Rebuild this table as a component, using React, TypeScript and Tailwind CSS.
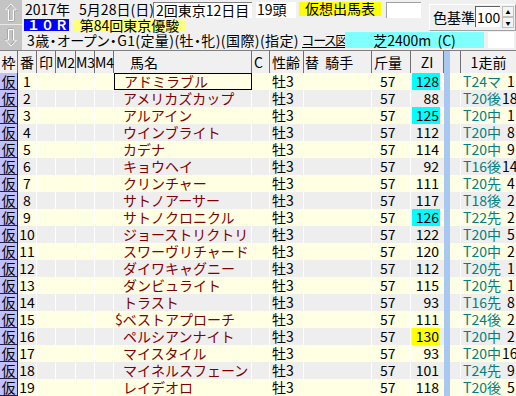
import React from "react";

type Horse = {
  no: number;
  name: string;
  zi: number;
  hl?: "cyan" | "yellow";
  prev: string;
  pos: number;
};

const horses: Horse[] = [
  { no: 1, name: "アドミラブル", zi: 128, hl: "cyan", prev: "T24マ", pos: 1 },
  { no: 2, name: "アメリカズカップ", zi: 88, prev: "T20後", pos: 18 },
  { no: 3, name: "アルアイン", zi: 125, hl: "cyan", prev: "T20中", pos: 1 },
  { no: 4, name: "ウインブライト", zi: 112, prev: "T20中", pos: 8 },
  { no: 5, name: "カデナ", zi: 114, prev: "T20中", pos: 9 },
  { no: 6, name: "キョウヘイ", zi: 92, prev: "T16後", pos: 14 },
  { no: 7, name: "クリンチャー", zi: 111, prev: "T20先", pos: 4 },
  { no: 8, name: "サトノアーサー", zi: 117, prev: "T18後", pos: 2 },
  { no: 9, name: "サトノクロニクル", zi: 126, hl: "cyan", prev: "T22先", pos: 2 },
  { no: 10, name: "ジョーストリクトリ", zi: 122, prev: "T20中", pos: 5 },
  { no: 11, name: "スワーヴリチャード", zi: 120, prev: "T20中", pos: 2 },
  { no: 12, name: "ダイワキャグニー", zi: 112, prev: "T20先", pos: 1 },
  { no: 13, name: "ダンビュライト", zi: 115, prev: "T20先", pos: 1 },
  { no: 14, name: "トラスト", zi: 93, prev: "T16先", pos: 8 },
  { no: 15, name: "$ベストアプローチ", zi: 111, prev: "T24後", pos: 2 },
  { no: 16, name: "ペルシアンナイト", zi: 130, hl: "yellow", prev: "T20中", pos: 2 },
  { no: 17, name: "マイスタイル", zi: 93, prev: "T20中", pos: 16 },
  { no: 18, name: "マイネルスフェーン", zi: 101, prev: "T24先", pos: 9 },
  { no: 19, name: "レイデオロ", zi: 118, prev: "T20後", pos: 5 },
];

const Arrow = ({ down }: { down?: boolean }) => (
  <svg width="14" height="19" viewBox="0 0 14 19" className={down ? "rotate-180" : ""}>
    <path d="M7.5 1.5 L13 7.5 L10 7.5 L10 18 L5 18 L5 7.5 L2 7.5 Z" fill="none" stroke="#8c8c8c" />
    <path d="M7 1 L12.5 7 L9.5 7 L9.5 17.5 L4.5 17.5 L4.5 7 L1.5 7 Z" fill="none" stroke="#ffffff" />
  </svg>
);

const Row = ({ h, i }: { h: Horse; i: number }) => {
  const odd = i % 2 === 0;
  const sep = "border-r border-white";
  return (
    <div className={`flex h-[17px] leading-[16px] ${odd ? "bg-[#ffffe4]" : "bg-[#eeeeee]"}`}>
      <div className="w-[18px] bg-[#c0c0ff] border-r border-b border-[#202040] text-center text-black">仮</div>
      <div className={`w-[19px] text-center ${sep}`}>{h.no}</div>
      <div className={`w-[19px] ${sep}`} />
      <div className={`w-[20px] ${sep}`} />
      <div className={`w-[19px] ${sep}`} />
      <div className={`w-[19px] ${sep}`} />
      <div
        className={`w-[138px] pl-[9px] text-[#800000] whitespace-nowrap ${
          i === 0 ? "border border-black pl-[8px] leading-[14px]" : sep
        }`}
      >
        {h.name.startsWith("$") ? <span className="-ml-[8px]">{h.name}</span> : h.name}
      </div>
      <div className={`w-[18px] ${sep}`} />
      <div className={`w-[34px] pl-[2px] ${sep}`}>牡3</div>
      <div className={`w-[68px] ${sep}`} />
      <div className={`w-[39px] pl-[8px] ${sep}`}>57</div>
      <div className="w-[33px] pl-[1px] pr-[4px]">
        <div
          className={`h-full text-right pr-[1px] ${
            h.hl === "cyan" ? "bg-[#00ffff]" : h.hl === "yellow" ? "bg-[#ffff00]" : ""
          }`}
        >
          {h.zi}
        </div>
      </div>
      <div className="w-[6px] bg-[#a8c8f0]" />
      <div className={`w-[11px] ${sep}`} />
      <div className="w-[55px] pl-[2px] whitespace-nowrap">
        <span className="text-[#008080]">{h.prev}</span>
        <span className={h.pos < 10 ? "pl-[6px]" : "pl-px"}>{h.pos}</span>
      </div>
    </div>
  );
};

const App: React.FC = () => {
  const hd = "border-r border-[#707070] pt-[3px]";
  return (
    <div className="w-[516px] h-[396px] overflow-hidden bg-[#f0f0f0] text-black text-[14px] font-['Liberation_Sans_Narrow','Noto_Sans_CJK_JP',sans-serif]">
      {/* top panel */}
      <div className="flex h-[50px]">
        <div className="w-[22px] flex flex-col">
          <div className="h-[25px] bg-[#c4c4c4] border-b border-[#e8e8e8] flex items-center justify-center">
            <Arrow />
          </div>
          <div className="h-[25px] bg-[#c4c4c4] flex items-center justify-center">
            <Arrow down />
          </div>
        </div>
        <div className="flex-1 flex flex-col">
          <div className="flex h-[32px]">
            <div className="w-[407px] flex flex-col">
              <div className="flex h-[19px] pt-[2px] leading-[15px]">
                <span className="w-[131px] pl-[3px] whitespace-nowrap">
                  2017年<span className="pl-[9px]">5月28日(日)</span>
                </span>
                <div className="w-[99px] h-[16px] bg-white border-t border-l border-[#808080] pl-[2px] whitespace-nowrap leading-[14px]">
                  2回東京12日目
                </div>
                <div className="ml-[4px] w-[40px] h-[16px] bg-white pl-[1px] leading-[15px]">19頭</div>
                <div className="ml-[3px] w-[82px] h-[14px] bg-[#ffff00] text-center leading-[13px]">仮想出馬表</div>
                <div className="ml-[5px] w-[35px] h-[16px] bg-white border-t border-l border-[#a0a0a0]" />
              </div>
              <div className="flex h-[13px] leading-[12px]">
                <div className="ml-[2px] w-[45px] h-[12px] bg-[#0000ff] text-white text-[13px] font-bold font-['Noto_Sans_CJK_JP',sans-serif] pl-[3px] tracking-[1px] whitespace-nowrap">
                  １０Ｒ
                </div>
                <div className="ml-[5px] w-[111px] h-[12px] bg-[#ffff80] text-center whitespace-nowrap">第84回東京優駿</div>
              </div>
            </div>
            <div className="mt-[4px] w-[87px] h-[27px] border-t border-l border-white border-r border-b border-r-[#a0a0a0] border-b-[#a0a0a0] flex items-start pt-px">
              <span className="pl-[3px] w-[45px] mt-[3px] leading-[16px] whitespace-nowrap">色基準</span>
              <div className="w-[25px] h-[21px] bg-white border-t border-l border-[#606060] leading-[20px] pl-[1px]">
                100
              </div>
              <div className="ml-[2px] flex flex-col">
                <div className="w-[12px] h-[11px] border border-[#c0c0c0] bg-[#f4f4f4] text-[5px] leading-[9px] text-center">▲</div>
                <div className="w-[12px] h-[11px] border border-[#c0c0c0] bg-[#f4f4f4] text-[5px] leading-[9px] text-center">▼</div>
              </div>
            </div>
          </div>
          <div className="flex h-[18px] leading-[16px]">
            <span className="w-[280px] pl-[5px] whitespace-nowrap tracking-[0.4px] [font-feature-settings:'palt']">
              3歳・オープン・G1(定量)(牡・牝)(国際)(指定)
            </span>
            <span className="w-[43px] text-[13px] underline underline-offset-2 whitespace-nowrap tracking-[-1px] [font-feature-settings:'palt']">
              コース図
            </span>
            <div className="w-[139px] h-[16px] bg-[#80ffff] text-center whitespace-pre">芝2400m  (C)</div>
            <div className="ml-[4px] w-[26px] h-[16px] bg-white" />
          </div>
        </div>
      </div>
      <div className="h-px bg-[#808080]" />
      {/* header */}
      <div className="flex h-[22px] leading-[16px] bg-[#f0f0f0]">
        <div className={`w-[18px] text-center ${hd}`}>枠</div>
        <div className={`w-[19px] text-center ${hd}`}>番</div>
        <div className={`w-[19px] text-center ${hd}`}>印</div>
        <div className={`w-[20px] text-center ${hd}`}>M2</div>
        <div className={`w-[19px] text-center ${hd}`}>M3</div>
        <div className={`w-[19px] text-center ${hd}`}>M4</div>
        <div className={`w-[138px] pl-[16px] ${hd}`}>馬名</div>
        <div className={`w-[18px] pl-[2px] ${hd}`}>C</div>
        <div className={`w-[34px] pl-[2px] ${hd}`}>性齢</div>
        <div className={`w-[68px] pl-[1px] whitespace-pre ${hd}`}>替  騎手</div>
        <div className={`w-[39px] pl-[2px] ${hd}`}>斤量</div>
        <div className={`w-[33px] text-center ${hd}`}>ZI</div>
        <div className="w-[6px] bg-[#a8c8f0]" />
        <div className={`w-[11px] ${hd}`} />
        <div className="w-[55px] text-center pt-[3px]">1走前</div>
      </div>
      {horses.map((h, i) => (
        <Row key={h.no} h={h} i={i} />
      ))}
    </div>
  );
};

export default App;
